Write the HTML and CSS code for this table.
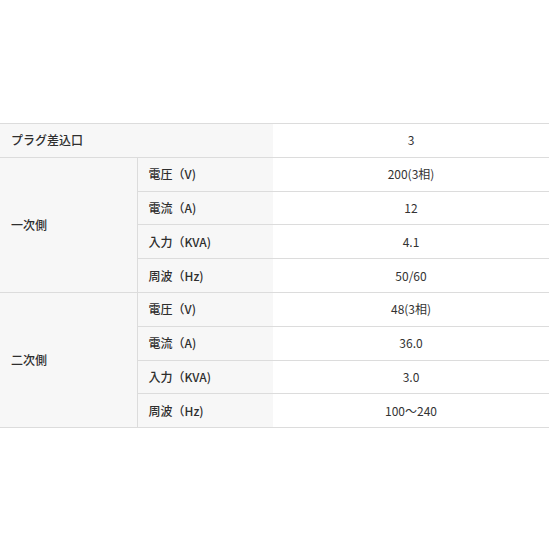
FILE: index.html
```html
<!DOCTYPE html>
<html lang="ja">
<head>
<meta charset="utf-8">
<link rel="stylesheet" href="styles.css">
</head>
<body>
<div class="wrap">
<table class="spec">
<colgroup>
<col class="c1"><col class="c2"><col class="c3">
</colgroup>
<tbody>
<tr><th colspan="2" class="h">プラグ差込口</th><td class="v">3</td></tr>
<tr><th rowspan="4" class="h grp">一次側</th><th class="h sub">電圧（V)</th><td class="v">200(3相)</td></tr>
<tr><th class="h sub">電流（A)</th><td class="v">12</td></tr>
<tr><th class="h sub">入力（KVA)</th><td class="v">4.1</td></tr>
<tr><th class="h sub">周波（Hz)</th><td class="v">50/60</td></tr>
<tr><th rowspan="4" class="h grp">二次側</th><th class="h sub">電圧（V)</th><td class="v">48(3相)</td></tr>
<tr><th class="h sub">電流（A)</th><td class="v">36.0</td></tr>
<tr><th class="h sub">入力（KVA)</th><td class="v">3.0</td></tr>
<tr><th class="h sub">周波（Hz)</th><td class="v">100～240</td></tr>
</tbody>
</table>
</div>
</body>
</html>
```
FILE: styles.css
```css
html, body {
  margin: 0;
  padding: 0;
  background: #fff;
}
.wrap {
  padding-top: 123px;
}
.spec {
  width: 549px;
  border-collapse: collapse;
  table-layout: fixed;
  font-family: "Noto Sans CJK JP", "Noto Sans", sans-serif;
  font-size: 12px;
  color: #333;
}
.c1 { width: 137px; }
.c2 { width: 136px; }
.c3 { width: 276px; }
.spec tr {
  height: 33.8px;
}
.spec th, .spec td {
  border-top: 1px solid #dcdcdc;
  border-bottom: 1px solid #dcdcdc;
  padding: 0 0 0 11px;
  line-height: 16px;
  vertical-align: middle;
}
.spec .h {
  background: #f7f7f7;
  font-weight: 500;
  color: #2e2e2e;
  text-align: left;
}
.spec .grp {
  border-right: 1px solid #dcdcdc;
}
.spec .v {
  text-align: center;
  padding: 0;
  color: #333;
}
```
